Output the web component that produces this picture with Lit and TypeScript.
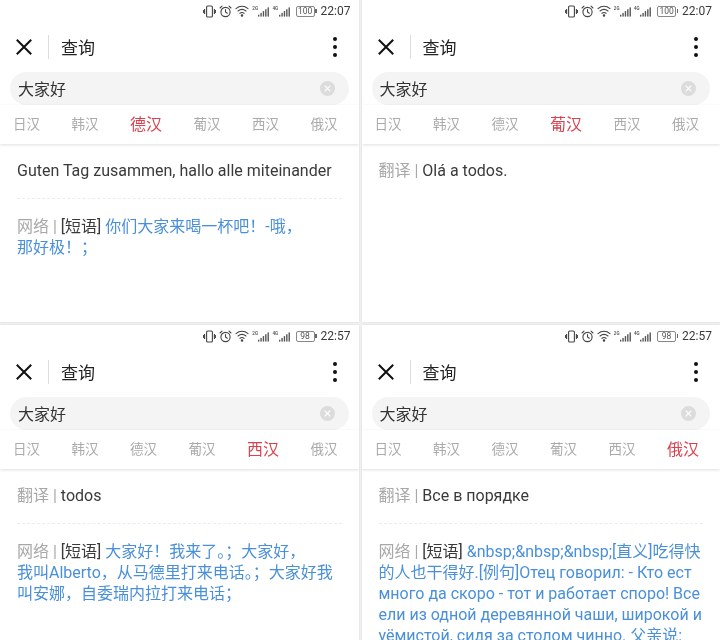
import { LitElement, html, css } from "lit";
import { customElement, property } from "lit/decorators.js";

const TABS = ["日汉", "韩汉", "德汉", "葡汉", "西汉", "俄汉"];

interface Panel {
  time: string;
  battery: string;
  active: number;
  label: string;
  result: string;
  tag: boolean;
  lines: string[];
}

const PANELS: Panel[] = [
  { time: "22:07", battery: "100", active: 2, label: "", result: "Guten Tag zusammen, hallo alle miteinander", tag: true,
    lines: ["你们大家来喝一杯吧！-哦，", "那好极！；"] },
  { time: "22:07", battery: "100", active: 3, label: "翻译", result: "Olá a todos.", tag: false, lines: [] },
  { time: "22:57", battery: "98", active: 4, label: "翻译", result: "todos", tag: true,
    lines: ["大家好！我来了。；大家好，", "我叫Alberto，从马德里打来电话。；大家好我", "叫安娜，自委瑞内拉打来电话；"] },
  { time: "22:57", battery: "98", active: 5, label: "翻译", result: "Все в порядке", tag: true,
    lines: ["&nbsp;&nbsp;&nbsp;[直义]吃得快", "的人也干得好.[例句]Отец говорил: - Кто ест", "много да скоро - тот и работает споро! Все", "ели из одной деревянной чаши, широкой и", "уёмистой, сидя за столом чинно. 父亲说:"] },
];

@customElement("phone-panel")
class PhonePanel extends LitElement {
  @property({ attribute: false }) data!: Panel;

  static styles = css`
    :host { display: flex; flex-direction: column; background: #fff; overflow: hidden; min-width: 0; box-shadow: 0 0 2px rgba(0,0,0,.1);
      font-family: Roboto, "Noto Sans CJK SC", sans-serif; filter: blur(0.35px); }
    .status { flex: none; height: 22px; display: flex; align-items: center; justify-content: flex-end; gap: 3px; padding: 0 8px 0 0; color: #444; }
    .status svg { display: block; }
    .time { font-size: 12px; margin-left: 1px; color: #3a3a3a; }
    .net { display: flex; align-items: flex-end; height: 11px; gap: 0.5px; }
    .net small { font-size: 4.5px; line-height: 5px; align-self: flex-start; font-weight: 500; }
    .batt { box-sizing: border-box; width: 19px; height: 11px; border: 1px solid #888; border-radius: 2px; font-size: 8.5px; line-height: 9px; text-align: center; color: #555; margin: 0 2px 0 3px; position: relative; }
    .batt::after { content: ""; position: absolute; right: -3px; top: 2.5px; width: 1.5px; height: 4px; background: #666; }
    .top { flex: none; height: 50px; display: flex; align-items: center; }
    .close { width: 48px; display: flex; justify-content: center; }
    .divider { width: 1px; height: 24px; background: #ddd; }
    .title { font-size: 17px; color: #222; margin-left: 12px; flex: 1; padding-bottom: 2px; }
    .more { width: 4px; display: flex; flex-direction: column; gap: 4px; margin-right: 22px; }
    .more i { width: 4px; height: 4px; border-radius: 50%; background: #111; }
    .search { flex: none; box-sizing: border-box; height: 33px; margin: 0 10px; border-radius: 17px; background: #f4f4f4; display: flex; align-items: center; padding: 0 14px 0 8px; font-size: 16px; color: #333; justify-content: space-between; }
    .search span:first-child { margin-top: -2px; }
    .clear { width: 15px; height: 15px; border-radius: 50%; background: #dcdcdc; display: flex; align-items: center; justify-content: center; }
    .tabs { flex: none; box-sizing: border-box; height: 39px; padding: 0 21px 3px 13px; display: flex; align-items: center; justify-content: space-between; font-size: 13.5px; color: #ababab; box-shadow: 0 1px 3px rgba(0,0,0,.13); position: relative; }
    .tabs .on { color: #d9434f; font-size: 16px; }
    .body { padding: 15.5px 17px 0; flex: none; font-size: 16px; line-height: 21px; color: #3a3a3a; }
    .muted { color: #a8a8a8; }
    .result { padding-bottom: 17px; border-bottom: 1px dashed #ececec; }
    .result.plain { border-bottom: 0; }
    .web { margin-top: 17px; white-space: nowrap; }
    .blue { color: #4a90d9; }
  `;

  render() {
    const d = this.data;
    return html`
      <div class="status">
        <svg width="13" height="13" viewBox="0 0 13 13" fill="none" stroke="#444" stroke-width="1.1">
          <rect x="3.6" y="1" width="5.8" height="11" rx="1" />
          <path d="M1.6 4v5M11.4 4v5M.4 5v3M12.6 5v3" />
        </svg>
        <svg width="13" height="13" viewBox="0 0 13 13" fill="none" stroke="#444" stroke-width="1.1" stroke-linecap="round">
          <circle cx="6.5" cy="7" r="4.6" />
          <path d="M6.5 4.5V7l1.8 1.2M1 3l2-1.8M12 3l-2-1.8" />
        </svg>
        <svg width="14" height="12" viewBox="0 0 14 12" fill="none" stroke="#444" stroke-width="1.1" stroke-linecap="round">
          <path d="M1 3.6C4.6.6 9.4.6 13 3.6M3 6c2.5-2 5.5-2 8 0M5 8.3c1.3-1 2.7-1 4 0" />
          <circle cx="7" cy="10.4" r=".7" fill="#444" />
        </svg>
        <span class="net"><small>2G</small>${this.bars()}</span>
        <span class="net"><small>4G</small>${this.bars()}</span>
        <span class="batt">${d.battery}</span>
        <span class="time">${d.time}</span>
      </div>
      <div class="top">
        <div class="close">
          <svg width="16" height="16" viewBox="0 0 16 16" stroke="#111" stroke-width="2" stroke-linecap="square">
            <path d="M1.5 1.5l13 13M14.5 1.5l-13 13" />
          </svg>
        </div>
        <div class="divider"></div>
        <div class="title">查询</div>
        <div class="more"><i></i><i></i><i></i></div>
      </div>
      <div class="search">
        <span>大家好</span>
        <span class="clear">
          <svg width="7" height="7" viewBox="0 0 7 7" stroke="#fff" stroke-width="1.2"><path d="M.7.7l5.6 5.6M6.3.7L.7 6.3" /></svg>
        </span>
      </div>
      <div class="tabs">
        ${TABS.map((t, i) => html`<span class=${i === d.active ? "on" : ""}>${t}</span>`)}
      </div>
      <div class="body">
        <div class="result ${d.tag ? "" : "plain"}">
          ${d.label ? html`<span class="muted">${d.label} | </span>` : ""}${d.result}
        </div>
        ${d.tag
          ? html`<div class="web">
              <span class="muted">网络 | </span>[短语]
              <span class="blue">${d.lines.map((l, i) => html`${i ? html`<br />` : ""}${l}`)}</span>
            </div>`
          : ""}
      </div>
    `;
  }

  private bars() {
    return html`<svg width="11" height="10" viewBox="0 0 12 10" fill="#555">
      <rect x="0" y="8" width="1.5" height="2" /><rect x="2.6" y="6" width="1.5" height="4" />
      <rect x="5.2" y="4" width="1.5" height="6" /><rect x="7.8" y="2" width="1.5" height="8" />
      <rect x="10.4" y="0" width="1.5" height="10" />
    </svg>`;
  }
}

@customElement("app-root")
export class AppRoot extends LitElement {
  static styles = css`
    :host { display: grid; grid-template-columns: 358.5px 358.5px; grid-template-rows: 322px 315px; gap: 3px; width: 720px; height: 640px; overflow: hidden; background: #f1f1f1; }
  `;
  render() {
    return PANELS.map((p) => html`<phone-panel .data=${p}></phone-panel>`);
  }
}
void PhonePanel;
